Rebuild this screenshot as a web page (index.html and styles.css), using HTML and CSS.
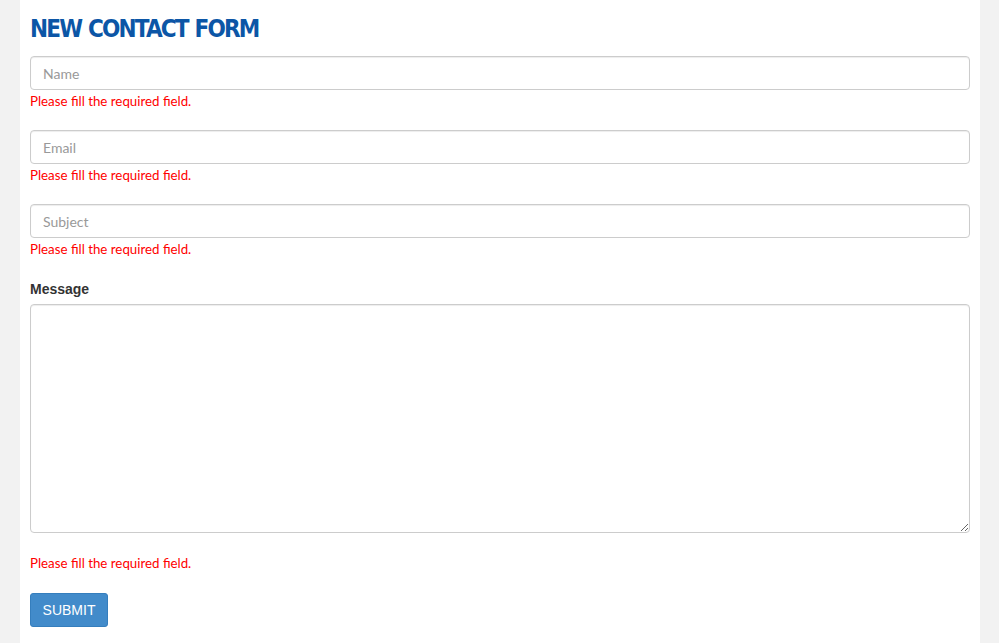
FILE: index.html
```html
<!DOCTYPE html>
<html>
<head>
<meta charset="utf-8">
<link rel="stylesheet" href="styles.css">
</head>
<body>
<div class="panel">
  <h1 class="title">NEW CONTACT FORM</h1>
  <form class="form">
    <div class="group">
      <input class="field" type="text" placeholder="Name">
      <div class="error">Please fill the required field.</div>
    </div>
    <div class="group">
      <input class="field" type="text" placeholder="Email">
      <div class="error">Please fill the required field.</div>
    </div>
    <div class="group">
      <input class="field" type="text" placeholder="Subject">
      <div class="error">Please fill the required field.</div>
    </div>
    <div class="group group-msg">
      <label class="label">Message</label>
      <textarea class="area"></textarea>
      <div class="error error-msg">Please fill the required field.</div>
    </div>
    <button class="submit" type="button">SUBMIT</button>
  </form>
</div>
</body>
</html>
```
FILE: styles.css
```css
html, body {
  margin: 0;
  padding: 0;
  background: #f2f2f2;
  height: 100%;
}
.panel {
  background: #ffffff;
  width: 940px;
  margin-left: 20px;
  padding: 14px 10px 0 10px;
  min-height: 629px;
}
.title {
  margin: 0;
  font-family: "DejaVu Sans Condensed", "DejaVu Sans", sans-serif;
  font-weight: bold;
  font-size: 24px;
  line-height: 30px;
  color: #0c56a6;
  letter-spacing: -1.8px;
  word-spacing: 1px;
}
.form {
  margin-top: 12px;
  display: flex;
  flex-direction: column;
}
.group {
  display: flex;
  flex-direction: column;
  margin-bottom: 20px;
}
.field {
  box-sizing: border-box;
  width: 940px;
  height: 34px;
  margin: 0;
  padding: 1px 12px 0 12px;
  border: 1px solid #cccccc;
  border-radius: 4px;
  font-family: "Lato", sans-serif;
  font-size: 14px;
  color: #555;
  background: #fff;
  box-shadow: inset 0 1px 1px rgba(0,0,0,0.075);
  outline: none;
}
.field::placeholder {
  color: #999999;
}
.error {
  margin-top: 2px;
  font-family: "Lato", sans-serif;
  font-size: 13.3px;
  line-height: 18px;
  color: #ff0000;
}
.group-msg {
  margin-top: 1px;
}
.label {
  font-family: "Liberation Sans", Arial, sans-serif;
  font-weight: bold;
  font-size: 14px;
  line-height: 20px;
  color: #333333;
  margin-bottom: 5px;
}
.area {
  box-sizing: border-box;
  width: 940px;
  height: 229px;
  margin: 0;
  padding: 6px 12px;
  border: 1px solid #cccccc;
  border-radius: 4px;
  box-shadow: inset 0 1px 1px rgba(0,0,0,0.075);
  display: block;
  resize: both;
  outline: none;
}
.error-msg {
  margin-top: 21px;
}
.submit {
  align-self: flex-start;
  box-sizing: border-box;
  width: 78px;
  height: 34px;
  padding: 0;
  margin-top: 1px;
  background: #428bca;
  border: 1px solid #357ebd;
  border-radius: 3px;
  color: #ffffff;
  font-family: "Liberation Sans", Arial, sans-serif;
  font-size: 14px;
}
```
